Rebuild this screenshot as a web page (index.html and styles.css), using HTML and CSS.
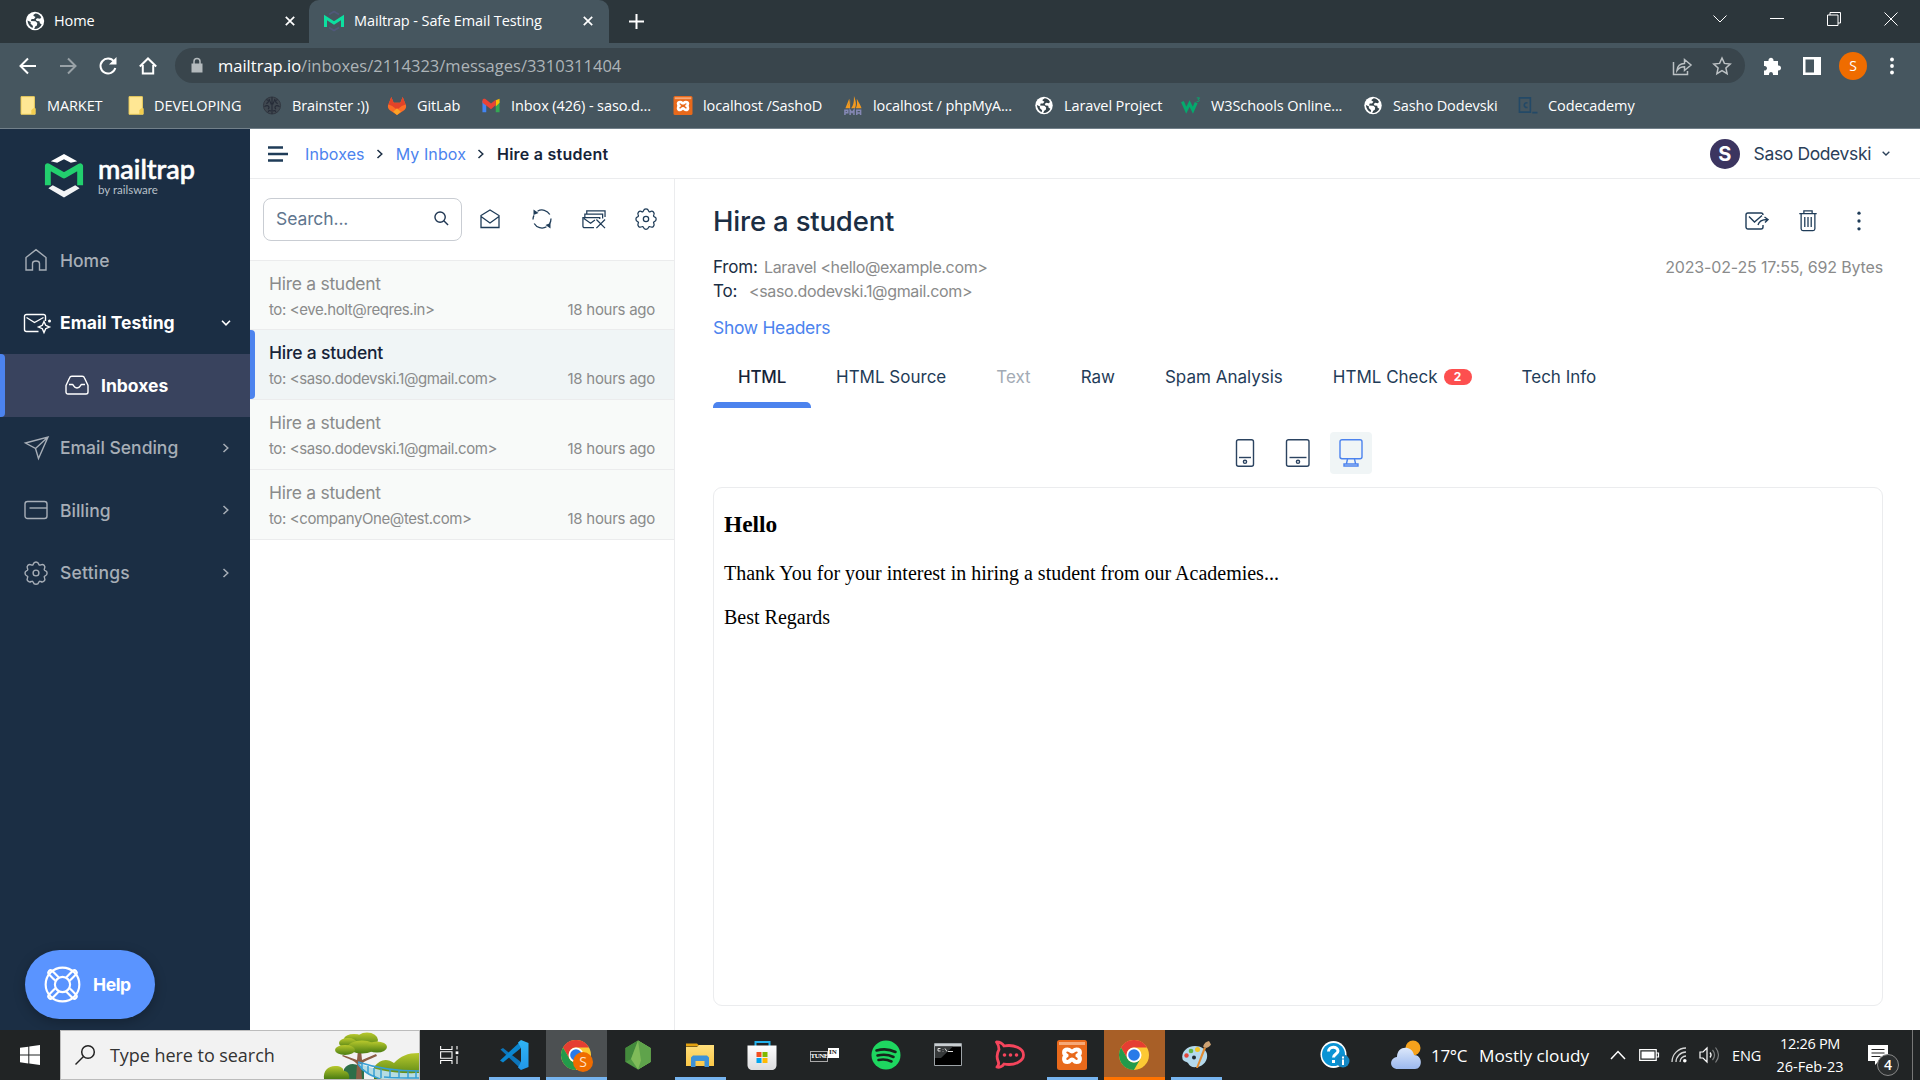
FILE: index.html
```html
<!DOCTYPE html>
<html lang="en">
<head>
<meta charset="utf-8">
<title>Mailtrap - Safe Email Testing</title>
<link rel="stylesheet" href="styles.css">
</head>
<body>
<svg class="defs" width="0" height="0">
  <defs>
    <linearGradient id="green" x1="0" x2="0" y1="0" y2="1"><stop offset="0" stop-color="#b9c92d"/><stop offset="1" stop-color="#4a7d12"/></linearGradient>
    <linearGradient id="cloud" x1="0" x2="0" y1="0" y2="1"><stop offset="0" stop-color="#dce8fb"/><stop offset="1" stop-color="#9bb8ee"/></linearGradient>
    <linearGradient id="folder" x1="0" x2="0" y1="0" y2="1"><stop offset="0" stop-color="#ffdf7c"/><stop offset="1" stop-color="#fbc848"/></linearGradient>
    <linearGradient id="code" x1="0" x2="0" y1="0" y2="1"><stop offset="0" stop-color="#30b5f5"/><stop offset="1" stop-color="#2196e8"/></linearGradient>
    <linearGradient id="bag" x1="0" x2="0" y1="0" y2="1"><stop offset="0" stop-color="#fff"/><stop offset="1" stop-color="#dcdcde"/></linearGradient>
  </defs>
  <symbol id="globe" viewBox="0 0 20 20"><circle cx="10" cy="10" r="9.2" fill="#fff"/><path d="M10.5 2.500c-2 1-2.500 1.500-1.800 2.600L10.500 6 9 8H6.500l-.6 2 4.600.3 1.800 1.700-.4 2.400-1.700 1-1 2.600c3.500.2 6.200-1.600 7.500-4.500l-1.800-1.200-.5-2-2.700-.4-1-1.600 1.700-1.100 2.700.5 1.200-1.500C15 3.800 12.600 2.400 10.500 2.500zM2.500 9.500c.3 3.500 2 6 5 7.500l.5-2-2.500-2.500.3-1.500z" fill="#35434a"/></symbol>
  <symbol id="xampp" viewBox="0 0 30 30"><rect width="30" height="30" rx="2.500" fill="#e8691b"/><path d="M2 2h26v3H2z" fill="#f6a877"/><path d="M10.500 9.500c-4.500 0-4 5-1 6-3 1-3.500 6.500 1 6.500 3 0 2.500-2.500 4.500-2.500s1.500 2.500 4.500 2.500c4.500 0 4-5.500 1-6.500 3-1 3.500-6-1-6-3 0-2.500 2-4.500 2s-1.500-2-4.500-2z" fill="none" stroke="#fff" stroke-width="4.200" stroke-linejoin="round"/></symbol>
  <symbol id="chrome" viewBox="0 0 30 30"><circle cx="15" cy="15" r="15" fill="#fcc934"/><path d="M2 7.500A15 15 0 0 1 28 7.500H15a7.500 7.500 0 0 0-6.500 3.800L8.500 18.700z" fill="#e53e32"/><path d="M2 7.500a15 15 0 0 0 12.900 22.500l6.600-11.300a7.500 7.500 0 0 1-13 0z" fill="#229a4b"/><circle cx="15" cy="15" r="7.500" fill="#fff"/><circle cx="15" cy="15" r="5.800" fill="#287ae8"/></symbol>
  <symbol id="page" viewBox="0 0 16 20"><path d="M.7.7h14v12.500h.8v6H.7z" fill="#ffe794" stroke="#f8d65c"/><path d="M11.500 19v-4l2-2h2v6z" fill="#f3cd4e"/></symbol>
  <symbol id="right" viewBox="0 0 8 12"><path d="M1.500 2l4.300 4-4.300 4" fill="none" stroke="currentColor" stroke-width="1.500"/></symbol>
  <symbol id="down" viewBox="0 0 12 8"><path d="M2 1.800l4 4 4-4" fill="none" stroke="currentColor" stroke-width="1.600"/></symbol>
  <symbol id="gear" viewBox="0 0 24 24"><path d="M9.200 3.200C9.700 1.500 10.300 1 12 1s2.300.5 2.800 2.200c.3 1 1 1.200 1.900.7 1.600-.8 2.300-.7 3.400.4s1.200 1.800.4 3.400c-.5.900-.3 1.600.7 1.900 1.700.5 1.900 1 1.900 2.400s-.3 2.300-1.900 2.800c-1 .3-1.200 1-.7 1.900.8 1.600.7 2.300-.4 3.400s-1.800 1.200-3.400.4c-.9-.5-1.600-.3-1.900.7-.5 1.700-1.100 2-2.800 2s-2.300-.3-2.800-2c-.3-1-1-1.200-1.900-.7-1.600.8-2.300.7-3.400-.4s-1.200-1.800-.4-3.400c.5-.9.300-1.600-.7-1.900C1.200 14.300 1 13.700 1 12s.2-1.900 1.800-2.400c1-.3 1.200-1 .7-1.900-.8-1.600-.7-2.300.4-3.400s1.800-1.200 3.400-.4c.9.500 1.600.3 1.900-.7z" fill="none" stroke="currentColor" stroke-width="1.400" stroke-linejoin="round"/><circle cx="12" cy="12" r="2.900" fill="none" stroke="currentColor" stroke-width="1.400"/></symbol>
</svg>

<header class="browser">
  <div class="tabs">
    <div class="tab tab-home"><svg class="i20"><use href="#globe"/></svg><span>Home</span><svg class="tab-x" viewBox="0 0 10 10"><path d="M.8.8l8.400 8.400M9.200.8L.8 9.200"/></svg></div>
    <div class="tab tab-active"><svg class="i20" viewBox="0 0 20 20"><path d="M5 3.500L10 .5l5 3M5 16.500l5 3 5-3" fill="none" stroke="#50587a" stroke-width="1.800"/><path d="M1.500 16V6.500L10 12l8.500-5.500V16" fill="none" stroke="#0ce0a0" stroke-width="3"/></svg><span>Mailtrap - Safe Email Testing</span><svg class="tab-x" viewBox="0 0 10 10"><path d="M.8.8l8.400 8.400M9.200.8L.8 9.200"/></svg></div>
    <svg class="new-tab" viewBox="0 0 15 15"><path d="M7.500 0v15M0 7.500h15"/></svg>
    <div class="window-controls">
      <svg viewBox="0 0 14 14"><path d="M.5 3.500L7 10l6.500-6.500"/></svg>
      <svg viewBox="0 0 14 14"><path d="M0 6.500h14"/></svg>
      <svg viewBox="0 0 14 14"><path d="M.5 3h10.500v10.500H.5zM3 3V.5h10.500V11H11"/></svg>
      <svg viewBox="0 0 14 14"><path d="M.5.500l13 13M13.500.5l-13 13"/></svg>
    </div>
  </div>
  <div class="toolbar">
    <svg class="nav-i" viewBox="0 0 20 20"><path d="M18 10H3M10 2.500L2.500 10l7.500 7.500"/></svg>
    <svg class="nav-i dim" viewBox="0 0 20 20"><path d="M2 10h15M10 2.500l7.500 7.500-7.500 7.500"/></svg>
    <svg class="nav-i" viewBox="0 0 20 20"><path d="M16 5.500A7.500 7.500 0 1 0 17.300 12"/><path d="M18.500 1v7.500H11z" fill="#fff" stroke="none"/></svg>
    <svg class="nav-i" viewBox="0 0 20 20"><path d="M1.800 10.500L10 2.500l8.200 8M4.800 9v8.500h10.400V9" /></svg>
    <div class="omnibox">
      <svg class="lock" viewBox="0 0 12 15"><path d="M.5 5.500h11v9H.5z" fill="#b4babd"/><path d="M3 6V3.500a3 3 0 0 1 6 0V6" fill="none" stroke="#b4babd" stroke-width="1.500"/></svg>
      <span class="url"><b>mailtrap.io</b>/inboxes/2114323/messages/3310311404</span>
      <svg class="share" viewBox="0 0 20 20"><path d="M1.500 6v12.500h14V15M5 14.500c.5-5 3-7 7.500-7V3.500L19 9l-6.500 5.500v-3.700c-3.500 0-5.500 1-7.500 3.700z"/></svg>
      <svg class="star" viewBox="0 0 20 20"><path d="M10 2l2.400 5.400 5.800.6-4.300 3.900 1.200 5.800-5.100-3-5.100 3 1.200-5.800L1.800 8l5.800-.6z"/></svg>
    </div>
    <svg class="ext" viewBox="0 0 20 20"><path d="M2 5h4.500C6 .5 12 .5 11.500 5H16v4.500c4-.5 4 5.500 0 5V19h-5c.5-4-4.500-4-4 0H2v-4.500c4 .3 4-5 0-4.500z" fill="#fff"/></svg>
    <svg class="panel" viewBox="0 0 18 18"><path d="M0 0h18v18H0zM2.500 2.500v13H11v-13z" fill="#fff" fill-rule="evenodd"/></svg>
    <span class="profile">S</span>
    <svg class="kebab" viewBox="0 0 6 18"><g fill="#fff"><circle cx="3" cy="2.500" r="1.900"/><circle cx="3" cy="9" r="1.900"/><circle cx="3" cy="15.500" r="1.900"/></g></svg>
  </div>
  <div class="bookmarks">
    <div class="bm"><svg><use href="#page"/></svg><span>MARKET</span></div>
    <div class="bm"><svg><use href="#page"/></svg><span>DEVELOPING</span></div>
    <div class="bm"><svg viewBox="0 0 20 20"><circle cx="10" cy="10" r="9" fill="#404850" stroke="#30363f"/><path d="M10 1v18M4 4c3 0 3 3 0 4M2 11c4-2 6 0 4 3M6 17c0-2 2-2 3-1M7 3c0 3 2 3 2 6M16 4c-3 0-3 3 0 4M18 11c-4-2-6 0-4 3M14 17c0-2-2-2-3-1M13 3c0 3-2 3-2 6" fill="none" stroke="#262c38" stroke-width="1.200"/></svg><span>Brainster :))</span></div>
    <div class="bm"><svg viewBox="0 0 20 20"><path d="M4 1l2.500 6h7L16 1l3.500 9c.4 2-.3 3.500-2 5L10 20l-7.500-5c-1.700-1.500-2.400-3-2-5z" fill="#fc6d26"/><path d="M4 1l2.500 6h7L16 1l3 8-4 1.500-5 4-5-4L1 9z" fill="#e24329"/><path d="M10 13l4 3.500-4 3.500-4-3.500z" fill="#fca326"/></svg><span>GitLab</span></div>
    <div class="bm"><svg viewBox="0 0 20 20"><path d="M1 5v12h4V8z" fill="#4285f4"/><path d="M15 8v9h4V5z" fill="#34a853"/><path d="M15 4.500L19 3v4l-4 4z" fill="#fbbc04"/><path d="M1 7V5c0-2 2-2.500 3.500-1.500L10 8l5-4v5.500L10 14 5 10z" fill="#ea4335"/></svg><span>Inbox (426) - saso.d...</span></div>
    <div class="bm"><svg><use href="#xampp"/></svg><span>localhost /SashoD</span></div>
    <div class="bm"><svg viewBox="0 0 20 20"><path d="M2 13c4-3 5-7 4-10M7 13V4c-1 5-1 5-5 9zM8 13c3-4 3-8 3-13 2 5 3 9 1 13zM13 13c2-4 1-7 1-10 2 4 4 7 5 10z" fill="#f29a20"/><path d="M1.500 20v-5h3v2.500h-3M7 20v-5l2 2.500 2-2.500v5M14 20v-5h4v5M14 18h4" fill="none" stroke="#8588b5" stroke-width="1.600"/></svg><span>localhost / phpMyA...</span></div>
    <div class="bm"><svg><use href="#globe"/></svg><span>Laravel Project</span></div>
    <div class="bm"><svg viewBox="0 0 20 20"><path d="M1 6l4 9 3.500-7L12 15l3.500-8" fill="none" stroke="#04aa6d" stroke-width="3.200"/><path d="M16 2h3l-1.500 1.800c2 0 1.500 2.500-1.500 2" fill="none" stroke="#04aa6d"/></svg><span>W3Schools Online...</span></div>
    <div class="bm"><svg><use href="#globe"/></svg><span>Sasho Dodevski</span></div>
    <div class="bm"><svg viewBox="0 0 20 20"><path d="M1 2h11.500v15H1zM14.500 17.500H20M9.500 7.500c-4-2-5 5.500 0 4.500" fill="none" stroke="#234967" stroke-width="1.700"/></svg><span>Codecademy</span></div>
  </div>
</header>

<div class="app">
  <aside class="sidebar">
    <div class="logo">
      <svg viewBox="0 0 40 46"><path d="M6.500 8.500L20 1l13.500 7.500L27 10l-7-3.500L13 10z" fill="#fff"/><path d="M3.500 33V13.500L20 23l16.500-9.500V33" fill="none" stroke="#22cf6e" stroke-width="6" stroke-linejoin="round"/><path d="M4 36l4.500-3L20 39l11.500-6 4.500 3-16 9.500z" fill="#f2f3f5"/></svg>
      <div class="logo-text"><span class="brand">mailtrap</span><span class="by">by railsware</span></div>
    </div>
    <nav>
      <a class="item"><svg class="ni" viewBox="0 0 24 24"><path d="M2 9.500L12 1.700l10 7.800V22h-6.500v-6.500c0-2-1.500-2.500-3.500-2.500s-3.500.5-3.500 2.500V22H2z"/></svg><span>Home</span></a>
      <a class="item on"><svg class="ni wide" viewBox="0 0 28 20"><path d="M22.500 8V3.500a2 2 0 0 0-2-2h-17a2 2 0 0 0-2 2v13a2 2 0 0 0 2 2h12M3.500 4.500l8 5 9-5M21 8.500l1.700 3.800 3.800 1.700-3.800 1.700L21 19.500l-1.700-3.800-3.800-1.700 3.800-1.700z"/><circle cx="26.500" cy="8" r=".8"/></svg><span>Email Testing</span><svg class="caret d"><use href="#down"/></svg></a>
      <a class="item sub"><svg class="ni" viewBox="0 0 24 20"><path d="M1 10.500L4.500 3a2.500 2.500 0 0 1 2.300-1.700h10.400A2.500 2.500 0 0 1 19.500 3l3.500 7.500V17a2 2 0 0 1-2 2H3a2 2 0 0 1-2-2zM4 9.500h3.500c1 0 1.300 3.500 4.500 3.500s3.500-3.500 4.500-3.500H20"/></svg><span>Inboxes</span></a>
      <a class="item"><svg class="ni" viewBox="0 0 24 24"><path d="M1.500 7L24 1 14.500 22.500 11.500 12.500zM11.500 12.500L24 1"/></svg><span>Email Sending</span><svg class="caret"><use href="#right"/></svg></a>
      <a class="item"><svg class="ni" viewBox="0 0 24 24"><rect x="1" y="3.500" width="22" height="17" rx="2.500"/><path d="M5.500 10H23"/></svg><span>Billing</span><svg class="caret"><use href="#right"/></svg></a>
      <a class="item settings"><svg class="ni"><use href="#gear"/></svg><span>Settings</span><svg class="caret"><use href="#right"/></svg></a>
    </nav>
    <div class="help"><svg viewBox="0 0 38 38"><circle cx="19" cy="19" r="17.300"/><circle cx="19" cy="19" r="7.800"/><path d="M13 9.500L8 4.500M9.500 13l-5-5M25 9.500l5-5M28.500 13l5-5M13 28.500l-5 5M9.500 25l-5 5M25 28.500l5 5M28.500 25l5 5M4.500 8c-1-2 1.500-4.500 3.500-3.500M33.500 8c1-2-1.500-4.500-3.500-3.500M4.500 30c-1 2 1.500 4.500 3.500 3.500M33.500 30c1 2-1.500 4.500-3.500 3.500M13 9.500l2 2M9.500 13l2 2M25 9.500l-2 2M28.500 13l-2 2M13 28.500l2-2M9.500 25l2-2M25 28.500l-2-2M28.500 25l-2-2"/></svg><span>Help</span></div>
  </aside>

  <main class="main">
    <div class="crumbs">
      <svg class="burger" viewBox="0 0 20 16"><path d="M0 1.500h15M0 8h20M0 14.500h15"/></svg>
      <a>Inboxes</a><svg class="sep"><use href="#right"/></svg><a>My Inbox</a><svg class="sep"><use href="#right"/></svg><strong>Hire a student</strong>
      <div class="user"><span class="avatar">S</span><span class="user-name">Saso Dodevski</span><svg><use href="#down"/></svg></div>
    </div>
    <div class="columns">
      <section class="list">
        <div class="list-tools">
          <div class="search"><span>Search...</span><svg viewBox="0 0 16 16"><circle cx="6.500" cy="6.500" r="5.500"/><path d="M10.500 10.500L15 15"/></svg></div>
          <div class="list-icons">
            <svg viewBox="0 0 22 22"><path d="M2 7.500L11 2l9 5.500v12H2zM2 8.500l9 6.500 9-6.500"/></svg>
            <svg viewBox="0 0 22 22"><path d="M6.500 3.200A9 9 0 0 1 18.800 6.500M3.200 15.500A9 9 0 0 0 15.500 18.800M2 11.500c0-1.500.2-3 1-4.200M20 10.500c0 2-.5 4-1.500 5.300"/><path d="M2.500 1.500v5.500L7.500 5zM19.500 20.500V15l-5 2z" fill="currentColor" stroke="none"/></svg>
            <svg class="wide" viewBox="0 0 26 22"><path d="M13.500 20H3.500A1.500 1.500 0 0 1 2 18.500V9.500h17.500V11M3 10.500l7 5 4.500-3.500M4 9V6h18.500v4.500M6 5.500V2.500h19V9M16 11.500l9 9M25 11.500l-9 9"/></svg>
            <svg viewBox="0 0 24 24"><use href="#gear"/></svg>
          </div>
        </div>
        <div class="mail first"><div class="subject">Hire a student</div><div class="meta"><span>to: &lt;eve.holt@reqres.in&gt;</span><time>18 hours ago</time></div></div>
        <div class="mail selected"><div class="subject">Hire a student</div><div class="meta"><span>to: &lt;saso.dodevski.1@gmail.com&gt;</span><time>18 hours ago</time></div></div>
        <div class="mail"><div class="subject">Hire a student</div><div class="meta"><span>to: &lt;saso.dodevski.1@gmail.com&gt;</span><time>18 hours ago</time></div></div>
        <div class="mail"><div class="subject">Hire a student</div><div class="meta"><span>to: &lt;companyOne@test.com&gt;</span><time>18 hours ago</time></div></div>
      </section>
      <section class="message">
        <div class="title-row"><h1>Hire a student</h1>
          <div class="actions">
            <svg viewBox="0 0 24 20"><path d="M18 14v2a2 2 0 0 1-2 2H3a2 2 0 0 1-2-2V4a2 2 0 0 1 2-2h13a2 2 0 0 1 2 2M4 5.500l5.500 5.500L17 4.500M13 14c1-3.500 4-5.500 9-5.500M19.500 6L23 8.500l-3 3"/></svg>
            <svg viewBox="0 0 24 24"><path d="M2.500 4h19M7.500 3.500V1h9v2.500M4.500 4v16.500a2 2 0 0 0 2 2h11a2 2 0 0 0 2-2V4M8.500 7.500v11M12 7.500v11M15.500 7.500v11"/></svg>
            <svg viewBox="0 0 24 24"><g fill="currentColor" stroke="none"><circle cx="12" cy="3.500" r="1.800"/><circle cx="12" cy="12" r="1.800"/><circle cx="12" cy="20.500" r="1.800"/></g></svg>
          </div>
        </div>
        <div class="info"><div class="who"><div><span class="from">From:</span><em>Laravel &lt;hello@example.com&gt;</em></div><div><span class="to">To:</span><em>&lt;saso.dodevski.1@gmail.com&gt;</em></div></div><div class="date">2023-02-25 17:55, 692 Bytes</div></div>
        <a class="headers">Show Headers</a>
        <div class="mtabs"><span class="cur">HTML</span><span>HTML Source</span><span class="off">Text</span><span>Raw</span><span>Spam Analysis</span><span>HTML Check<i>2</i></span><span>Tech Info</span></div>
        <div class="devices">
          <div><svg viewBox="0 0 28 28"><rect x="5.500" y=".7" width="17" height="26.600" rx="2"/><path d="M8 18.500h12"/><circle cx="14" cy="22.800" r="1.600"/></svg></div>
          <div><svg viewBox="0 0 28 28"><rect x="2.500" y=".7" width="22.500" height="26.600" rx="2"/><path d="M5.500 18.500h17"/><circle cx="14" cy="22.800" r="1.600"/></svg></div>
          <div class="cur"><svg viewBox="0 0 28 28"><rect x="3" y=".7" width="22" height="19" rx="2"/><path d="M10.500 20l-1 4.500M17.500 20l1 4.500M7 27h14v-2H7z"/></svg></div>
        </div>
        <article class="preview"><h3>Hello</h3><p>Thank You for your interest in hiring a student from our Academies...</p><p>Best Regards</p></article>
      </section>
    </div>
  </main>
</div>

<footer class="taskbar">
  <div class="start"><svg viewBox="0 0 20 20"><path d="M0 2.800L8.300 1.700v7.800H0zM9.300 1.500L20 0v9.500H9.300zM0 10.500h8.300v7.900L0 17.200zM9.300 10.500H20V20L9.300 18.500z" fill="#fff"/></svg></div>
  <div class="win-search">
    <svg class="mag" viewBox="0 0 20 20"><circle cx="13" cy="7" r="6.300"/><path d="M8.500 11.500L.5 19.500"/></svg><span>Type here to search</span>
    <svg class="tree" viewBox="0 0 95 48"><path d="M50 36c6-8 13-9 20-4 7-7 13-10 25-10v26H50z" fill="url(#green)"/><path d="M20 48V38c5-8 15-5 20 0v10z" fill="#2e6e49"/><path d="M0 48c-1-8 4-13 11-13 6 0 8 2 9 5 4 0 6 4 5 8z" fill="url(#green)"/><path d="M32 48l1-15c-3-4-9-5-15-8l1-1 14 5 1-10h3l1 10 14-6 1 2c-8 4-14 5-16 9l1 14z" fill="#8b5e45"/><g fill="url(#green)"><ellipse cx="30" cy="8" rx="10" ry="5"/><ellipse cx="43" cy="9" rx="11" ry="7.500"/><ellipse cx="24" cy="12" rx="9" ry="5"/><ellipse cx="38" cy="16" rx="14" ry="6.500"/><ellipse cx="21" cy="19" rx="10" ry="5"/><ellipse cx="53" cy="16" rx="10" ry="5.500"/></g><path d="M34 32c15 6 31 11 61 10v6H58c-10-2-18-7-24-16z" fill="#b5dce2"/><path d="M34 31c18 6 36 9 61 9M34 33c5 8 12 11 22 15M38 33v6M44 35v8M50 37v9M57 38v9M66 39v7M75 40v7M84 40v7M92 40v7M60 46c12 1 22 1 35 1" fill="none" stroke="#379fd4" stroke-width="1.500"/></svg>
  </div>
  <div class="tk view"><svg viewBox="0 0 22 20"><path d="M.7 0v4h12.500V0M.7 20v-4h12.500v4M.7 6.500h12.500v7H.7zM18.700 0v4M18.700 11v9" fill="none" stroke="#fff" stroke-width="1.200"/><path d="M17.200 6h3v3h-3z" fill="#fff"/></svg></div>
  <div class="apps">
    <div class="tk run"><svg class="app-i" viewBox="0 0 30 30"><path d="M1.500 9.500L4 8l18 14v7z" fill="#0d75ba"/><path d="M1 20.500L22 1v7L4 22.500z" fill="#0b86cf"/><path d="M22 0l7.500 3v24L22 30l-3-2.500L22 22V8l-3-5.500z" fill="url(#code)"/></svg></div>
    <div class="tk run full gray"><svg class="app-i" viewBox="0 0 30 30"><use href="#chrome"/></svg><b class="badge">S</b></div>
    <div class="tk"><svg class="app-i" viewBox="0 0 30 30"><path d="M15 .5L27.500 8v14L15 29.500 2.500 22V8z" fill="#529b45"/><path d="M15 .5L8 19 2.500 22V8z" fill="#438a3c"/><path d="M15 .5L8 19l7 10.500L27.500 22V8z" fill="#7fbb59"/><path d="M15 .5l3 20-3 9L27.500 22V8z" fill="#5fa34b"/></svg></div>
    <div class="tk run"><svg class="app-i" viewBox="0 0 30 30"><path d="M1 3.500h11l3 3H1z" fill="#e3a110"/><path d="M1 7h11l2-2h15v21H1z" fill="url(#folder)"/><path d="M6 27V17.500l2-2h14l2 2V27h-4.500v-6h-9v6z" fill="#3d92d8"/></svg></div>
    <div class="tk"><svg class="app-i" viewBox="0 0 30 30"><path d="M8.500 6.500V2h14v4.500" fill="none" stroke="#23b2ed" stroke-width="2"/><path d="M.5 5.500h29V25c0 3-2 5-5 5h-19c-3 0-5-2-5-5z" fill="url(#bag)"/><path d="M9.500 12h5v5h-5z" fill="#f25022"/><path d="M15.500 12h5v5h-5z" fill="#7fba00"/><path d="M9.500 18h5v5h-5z" fill="#00a4ef"/><path d="M15.500 18h5v5h-5z" fill="#ffb900"/></svg></div>
    <div class="tk"><div class="tunein"><span>TUNE</span><b>IN</b></div></div>
    <div class="tk"><svg class="app-i" viewBox="0 0 30 30"><circle cx="15" cy="15" r="14.500" fill="#1ed760"/><path d="M5.500 10.500c7-2 13-1.500 19 1.500M6.500 15.500c6-1.500 11-1 16 1.500M7.500 20c5-1.200 9-.5 13 1.500" fill="none" stroke="#17251b" stroke-width="2.600" stroke-linecap="round"/></svg></div>
    <div class="tk"><svg class="app-i" viewBox="0 0 30 30"><path d="M1.500 3.500h27v22h-27z" fill="#000" stroke="#9da3a7"/><path d="M2 4h26v2.500H2z" fill="#c9ced1"/><path d="M2 6.500h18L8 18H2z" fill="#36393a"/><path d="M7.500 8.500H5V11h2.500M10 9v.5M10 11v.5M12 8.500l2 3M15 11.500h5" fill="none" stroke="#ddd"/></svg></div>
    <div class="tk"><svg class="app-i" viewBox="0 0 30 30"><path d="M1.500 2c3 0 6 1.500 7.500 4C19 4 28.500 8.500 28.500 15S19 26 9 24c-1.500 2.500-5 4-7 3 2-2 2-4 1-6C1.500 17 2 13 4 9.500 4 6 3 4 1.500 2z" fill="none" stroke="#f5455c" stroke-width="2.800" stroke-linejoin="round"/><g fill="#f5455c"><circle cx="9.500" cy="15" r="1.800"/><circle cx="15.500" cy="15" r="1.800"/><circle cx="21.500" cy="15" r="1.800"/></g></svg></div>
    <div class="tk run"><svg class="app-i" viewBox="0 0 30 30"><use href="#xampp"/></svg></div>
    <div class="tk full orange"><svg class="app-i" viewBox="0 0 30 30"><use href="#chrome"/></svg></div>
    <div class="tk run"><svg class="app-i" viewBox="0 0 30 30"><path d="M14 6C6 6 0 12 1.500 19c1 3 4 2 5.500 4 2 4 5 4.500 9 4 7-1 11-7 10-13-1-5-6-8-12-8z" fill="#b4d9ec"/><circle cx="5.500" cy="15.500" r="2.200" fill="#e4453a"/><circle cx="10" cy="11" r="2.300" fill="#62b647"/><circle cx="16.500" cy="9.500" r="2.500" fill="#f2c523"/><circle cx="13" cy="17.500" r="2" fill="#1f2a30"/><path d="M15 28l8-21 2 1-8 20z" fill="#e28b32"/><path d="M22 6.500c1-3 3-5 6-5.500l2 3.500c-1 2-3 3-5 3.500z" fill="#cda274"/></svg></div>
  </div>
  <div class="tray">
    <svg class="hp" viewBox="0 0 30 30"><ellipse cx="13.500" cy="14.500" rx="13" ry="13.500" fill="#fff"/><circle cx="13.500" cy="14.500" r="11.500" fill="#0a93d4"/><path d="M8.500 11.500C8.500 6 18 6 18 11c0 3-4.500 3-4.500 6.500M13.500 20v3" fill="none" stroke="#fff" stroke-width="3"/><circle cx="23" cy="21" r="6.500" fill="#1488c5"/><path d="M23 16.500v2M23 19.500v5.500" stroke="#fff" stroke-width="2"/></svg>
    <svg class="weather" viewBox="0 0 31 30"><circle cx="22" cy="8" r="7.500" fill="#f6a21c"/><path d="M7 29c-9 0-9-11-1-12 0-12 15-12 17-2 9 0 9 14 1 14z" fill="url(#cloud)"/></svg>
    <span class="temp">17°C</span><span class="cond">Mostly cloudy</span>
    <svg class="up" viewBox="0 0 16 10"><path d="M1 9l7-7.500L15 9"/></svg>
    <svg class="bat" viewBox="0 0 20 12"><path d="M.7.700h16.500v10.600H.7zM17.500 4h2v4h-2" fill="none" stroke="#fff" stroke-width="1.200"/><path d="M2.500 2.500h13v7h-13z" fill="#fff"/></svg>
    <svg class="wifi" viewBox="0 0 16 16"><path d="M1 15A14 14 0 0 1 15 1M5 15A10 10 0 0 1 15 5M9 15a6 6 0 0 1 6-6" fill="none" stroke="#d6d7d7" stroke-width="1.300"/><circle cx="13.800" cy="13.800" r="1.800" fill="#fff"/></svg>
    <svg class="vol" viewBox="0 0 20 18"><path d="M1 6h3l4-4v14l-4-4H1zM11 6.500c1.300 1.500 1.300 3.500 0 5" fill="none" stroke="#fff" stroke-width="1.200"/><path d="M13.500 4c2.500 3 2.500 7 0 10M16.500 1.500c4 5 4 10 0 15" fill="none" stroke="#7c7e7f" stroke-width="1.200"/></svg>
    <span class="lang">ENG</span>
    <div class="clock"><span>12:26 PM</span><span>26-Feb-23</span></div>
    <div class="notif"><svg viewBox="0 0 20 20"><path d="M0 0h20v16h-9l-4 4v-4H0z" fill="#fff"/><path d="M3.500 4.500h13M3.500 8h13M3.500 11.500h9" stroke="#222" stroke-width="1.200"/></svg><b>4</b></div>
  </div>
</footer>
</body>
</html>
```
FILE: styles.css
```css
* { box-sizing: border-box; }
body { margin: 0; width: 1920px; height: 1080px; overflow: hidden; display: flex; flex-direction: column; background: #fff; font-family: Inter, "Liberation Sans", sans-serif; color: #1b2e44; }
svg { display: block; flex: none; overflow: visible; }
.defs { position: absolute; }
.i20 { width: 20px; height: 20px; }

/* browser chrome */
.browser { height: 129px; background: #46565f; border-bottom: 1px solid #72808a; color: #fff; font-family: "Open Sans", "Noto Sans", sans-serif; font-size: 14.500px; letter-spacing: -.1px; white-space: nowrap; }
.tabs { height: 43px; background: #2c363b; display: flex; align-items: center; }
.tab { height: 43px; display: flex; align-items: center; gap: 9px; padding: 0 16px 2px 0; }
.tab-home { width: 309px; padding-left: 25px; padding-right: 14px; background: #2c363b; }
.tab-active { width: 300px; padding-left: 15px; gap: 10px; background: #46565f; border-radius: 10px 10px 0 0; }
.tab-x { width: 10px; height: 10px; margin-left: auto; stroke: #fff; stroke-width: 1.700; }
.new-tab { width: 15px; height: 15px; margin-left: 20px; stroke: #fff; stroke-width: 2; }
.window-controls { margin: 0 22px 6px auto; display: flex; gap: 43px; }
.window-controls svg { width: 14px; height: 14px; fill: none; stroke: #fff; stroke-width: 1; }
.toolbar { height: 45px; display: flex; align-items: center; padding-left: 18px; }
.nav-i { width: 20px; height: 20px; margin-right: 20px; fill: none; stroke: #fff; stroke-width: 2; }
.nav-i:nth-child(4) { margin-right: 17px; }
.dim { opacity: .45; }
.omnibox { width: 1570px; height: 35px; border-radius: 18px; background: #39454c; display: flex; align-items: center; padding: 0 13px 0 16px; }
.lock { width: 12px; height: 15px; margin-right: 15px; }
.url { font-size: 16.500px; color: #adb4b8; letter-spacing: 0; margin-top: -1px; }
.url b { font-weight: 400; color: #fff; }
.share, .star { width: 20px; height: 20px; fill: none; stroke: #bcc1c4; stroke-width: 1.500; }
.share { margin-left: auto; margin-right: 20px; }
.ext { width: 20px; height: 20px; margin-left: 17px; }
.panel { width: 18px; height: 18px; margin-left: 21px; }
.profile { width: 28px; height: 28px; margin-left: 18px; border-radius: 50%; background: #ef6c00; text-align: center; font-size: 14px; line-height: 27px; }
.kebab { width: 6px; height: 18px; margin-left: 22px; }
.bookmarks { height: 40px; display: flex; align-items: center; padding: 0 0 5px 18px; }
.bm { display: flex; align-items: center; gap: 10px; width: 108px; height: 35px; flex: none; }
.bm svg { width: 20px; height: 19px; }
.bm:nth-child(1) span { margin-left: -1px; }
.bm:nth-child(2) { width: 136px; }
.bm:nth-child(2) span { margin-left: -2px; }
.bm:nth-child(3) { width: 125px; }
.bm:nth-child(4) { width: 94px; }
.bm:nth-child(5) { width: 192px; }
.bm:nth-child(6) { width: 170px; }
.bm:nth-child(7) { width: 191px; }
.bm:nth-child(8) { width: 147px; }
.bm:nth-child(9) { width: 182px; }
.bm:nth-child(10) { width: 155px; }

/* layout */
.app { display: flex; height: 901px; }
.sidebar { width: 250px; background: #1b2e44; display: flex; flex-direction: column; color: #a7aeb7; }
.main { flex: 1; display: flex; flex-direction: column; }
.columns { display: flex; flex: 1; }

/* sidebar */
.logo { height: 100px; display: flex; gap: 14px; padding: 24px 0 0 44px; }
.logo svg { width: 40px; height: 45px; }
.logo-text { display: flex; flex-direction: column; color: #fff; }
.brand { font: 500 27px/32px Lato, sans-serif; -webkit-text-stroke: .6px #fff; letter-spacing: 0; }
.by { font: 11.500px/14px Lato, sans-serif; color: #b8c0c9; margin-top: -2px; }
.item { height: 62.500px; display: flex; align-items: center; padding: 0 19px 0 24px; font-size: 17.500px; font-weight: 500; }
.ni { width: 24px; height: 24px; margin-right: 12px; fill: none; stroke: currentColor; stroke-width: 1.400; }
.ni.wide { width: 28px; height: 20px; margin: 0 9px 0 -1px; }
.caret { width: 8px; height: 12px; margin: 0 1px 0 auto; }
.caret.d { width: 12px; height: 8px; margin-right: -1px; }
.on { color: #fff; font-weight: 700; letter-spacing: .05px; }
.settings { letter-spacing: .2px; }
.sub { color: #fff; font-weight: 700; background: linear-gradient(#39435e, #39435e) 0 0 / 100% 100%; padding-left: 65px; position: relative; }
.sub::before { content: ""; position: absolute; left: 0; top: 0; bottom: 0; width: 5px; background: #4c83ee; border-radius: 0 4px 4px 0; }
.help { width: 130px; height: 69px; margin: auto 0 11px 25px; border-radius: 35px; background: #5a94ff; box-shadow: 0 3px 12px rgba(0,0,0,.25); color: #fff; display: flex; align-items: center; gap: 12px; padding-left: 19px; font-size: 17.500px; font-weight: 700; letter-spacing: -.4px; }
.help svg { width: 37px; height: 37px; fill: none; stroke: #fff; stroke-width: 2.200; }

/* header */
.crumbs { height: 50px; flex: none; border-bottom: 1px solid #ebecee; display: flex; align-items: center; padding: 0 29px 0 18px; font-size: 16px; }
.burger { width: 20px; height: 16px; margin-right: 17px; stroke: #1f3c58; stroke-width: 2.300; }
.crumbs a { color: #4c83ee; letter-spacing: .1px; }
.crumbs strong { font-weight: 600; color: #162338; letter-spacing: .25px; }
.sep { width: 8px; height: 12px; margin: 0 12px 0 11px; }
.user { margin-left: auto; display: flex; align-items: center; font-size: 17.500px; color: #2b4059; letter-spacing: -.38px; }
.avatar { width: 30px; height: 30px; margin-right: 14px; border-radius: 50%; background: #3c3560; color: #fff; font: 700 20px/30px Inter, sans-serif; text-align: center; }
.user svg { width: 10px; height: 7px; margin-left: 10px; }

/* message list */
.list { width: 425px; border-right: 1px solid #ebecee; }
.list-tools { height: 81px; display: flex; align-items: center; padding: 0 16px 0 13px; }
.search { width: 199px; height: 43px; border: 1px solid #c9cdd3; border-radius: 8px; display: flex; align-items: center; justify-content: space-between; padding: 0 12px 2px; font-size: 17.500px; color: #60758e; letter-spacing: -.1px; }
.search svg { width: 15px; height: 15px; fill: none; stroke: #1f3652; stroke-width: 1.500; }
.list-icons { display: flex; gap: 30px; margin: 0 0 2px 17px; }
.list-icons svg { width: 22px; height: 22px; fill: none; stroke: currentColor; stroke-width: 1.300; color: #1f3c58; }
.list-icons .wide { width: 25px; margin: 0 -1px 0 -2px; }
.mail { height: 70px; padding: 10px 19px 0; border-bottom: 1px solid #ebeced; background: #f8faf9; color: #8a8b8b; position: relative; }
.mail.first { border-top: 1px solid #ebeced; }
.subject { font-size: 17.500px; line-height: 26px; letter-spacing: -.28px; }
.meta { display: flex; justify-content: space-between; font-size: 15px; line-height: 26px; letter-spacing: -.4px; }
.meta time { letter-spacing: -.27px; }
.selected { background: #f0f5f6; }
.selected::before { content: ""; position: absolute; left: 0; top: 0; bottom: 0; width: 5px; background: #4c83ee; border-radius: 0 4px 4px 0; }
.selected .subject { color: #162338; font-weight: 500; letter-spacing: -.2px; }

/* message */
.message { flex: 1; padding: 0 37px 24px 38px; display: flex; flex-direction: column; }
.title-row { display: flex; height: 76px; align-items: center; padding-top: 7px; }
h1 { margin: 0; font-size: 27.500px; font-weight: 500; letter-spacing: -.18px; }
.actions { margin-left: auto; display: flex; gap: 27px; padding-right: 12px; }
.actions svg { width: 24px; height: 22px; fill: none; stroke: currentColor; stroke-width: 1.400; color: #1f3c58; }
.info { display: flex; justify-content: space-between; line-height: 24px; font-size: 16px; color: #8a8b8b; letter-spacing: -.15px; }
.who { letter-spacing: -.35px; }
.who > div { display: flex; height: 24px; }
.from, .to { font-size: 17px; color: #1b2e44; letter-spacing: -.2px; width: 51px; }
.to { width: 36px; }
em { font-style: normal; }
.headers { font-size: 17.500px; line-height: 24px; margin-top: 13px; color: #4c83ee; letter-spacing: -.32px; }
.mtabs { display: flex; margin-top: 24px; height: 44px; font-size: 17px; line-height: 26px; color: #1f3c58; letter-spacing: 0; }
.mtabs span { padding: 0 25px; display: flex; }
.mtabs .cur { color: #162338; font-weight: 500; width: 98px; letter-spacing: -.2px; position: relative; }
.mtabs .cur::after { content: ""; position: absolute; left: 0; right: 0; bottom: 0; height: 6px; background: #4c83ee; border-radius: 5px 5px 0 0; }
.mtabs .off { color: #a3abb5; }
.mtabs i { font: 700 12px/16px Inter, sans-serif; background: #fd4f4f; color: #fff; height: 16px; width: 28px; text-align: center; border-radius: 8px; margin: 5px 0 0 6px; }
.devices { display: flex; justify-content: center; gap: 11px; margin: 24px 0 13px; }
.devices div { width: 42px; height: 42px; padding: 7px; border-radius: 4px; color: #2b4360; }
.devices .cur { background: #f0f5f6; color: #4c83ee; }
.devices svg { width: 28px; height: 28px; fill: none; stroke: currentColor; stroke-width: 1.400; }
.preview { height: 519px; border: 1px solid #ebecee; border-radius: 9px; padding: 0 10px; font: 20px/23px "Liberation Serif", serif; color: #000; }
.preview h3 { font-size: 23.400px; line-height: 27px; margin: 23px 0 24px; }
.preview p { margin: 0 0 20.500px; }

/* taskbar */
.taskbar { height: 50px; background: #212425; display: flex; color: #fff; font-family: "Open Sans", "Noto Sans", sans-serif; white-space: nowrap; }
.start { width: 60px; padding: 15px 20px; }
.start svg { width: 20px; height: 20px; }
.win-search { width: 360px; background: #f2f2f2; border: 1px solid #bcbcbc; display: flex; align-items: center; padding-left: 14px; color: #333; font-size: 18px; letter-spacing: -.05px; overflow: hidden; }
.mag { width: 20px; height: 20px; margin-right: 15px; fill: none; stroke: #222; stroke-width: 1.500; }
.tree { width: 95px; height: 48px; margin-left: auto; }
.tk { width: 61px; height: 50px; display: flex; align-items: center; justify-content: center; padding-right: 1px; position: relative; }
.view svg { width: 20px; height: 20px; }
.view { margin-right: 3px; }
.apps { display: flex; gap: 1px; }
.app-i { width: 30px; height: 30px; }
.run::after { content: ""; position: absolute; height: 3px; bottom: 0; left: 5px; right: 5px; background: #76b4ef; }
.full.run::after { left: 0; right: 0; }
.gray { background: #4c5052; }
.orange { background: #a85f27; border-bottom: 3px solid #ff7300; padding-top: 3px; }
.badge { position: absolute; left: 27px; top: 22px; width: 20px; height: 20px; border-radius: 50%; background: #ef6c00; font: 14px/19px "Open Sans", sans-serif; text-align: center; color: #ffe0c8; }
.tunein { display: flex; font: 700 7px/9px "Liberation Serif", serif; }
.tunein span { border: 1px solid #aaa; height: 11px; margin-top: 3px; width: 18px; text-align: center; letter-spacing: -.5px; }
.tunein b { background: #fff; color: #222; width: 11px; height: 10px; text-align: center; }
.tray { margin-left: auto; display: flex; align-items: center; width: 600px; }
.hp { width: 30px; height: 30px; }
.weather { width: 31px; height: 30px; margin-left: 41px; }
.temp { font-size: 17px; margin-left: 9px; width: 48px; letter-spacing: -.3px; }
.cond { font-size: 17.200px; width: 131px; letter-spacing: 0; }
.up { width: 16px; height: 10px; fill: none; stroke: #fff; stroke-width: 1.500; }
.bat { width: 20px; height: 12px; margin-left: 13px; }
.wifi { width: 16px; height: 16px; margin-left: 12px; }
.vol { width: 20px; height: 18px; margin-left: 12px; }
.lang { font-size: 14.500px; margin-left: 13px; width: 39px; letter-spacing: -.1px; }
.clock { width: 78px; display: flex; flex-direction: column; align-items: center; font-size: 14.500px; line-height: 23px; letter-spacing: -.3px; }
.clock span:last-child { letter-spacing: 0; }
.notif { position: relative; margin-left: 19px; width: 45px; height: 50px; padding-top: 15px; border-right: 1px solid #777; }
.notif svg { width: 20px; height: 20px; }
.notif b { position: absolute; left: 9px; top: 24px; width: 22px; height: 22px; border: 1px solid #888; border-radius: 50%; background: #2b2e2f; font: 600 14px/20px "Open Sans", sans-serif; text-align: center; }
```
